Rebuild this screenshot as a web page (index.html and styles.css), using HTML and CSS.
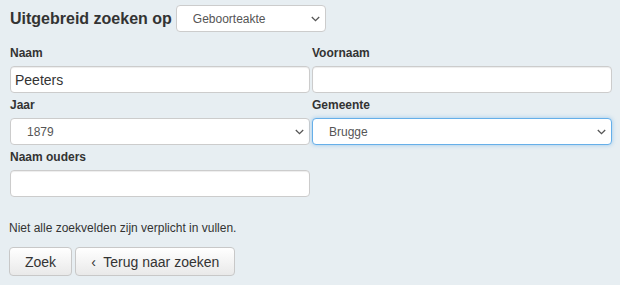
FILE: index.html
```html
<!DOCTYPE html>
<html lang="nl">
<head>
<meta charset="utf-8">
<title>Uitgebreid zoeken</title>
<link rel="stylesheet" href="styles.css">
</head>
<body>
<div class="page">
  <div class="header">
    <h1 class="title">Uitgebreid zoeken op</h1>
    <span class="select-wrap select-wrap-type">
      <select class="select">
        <option>Geboorteakte</option>
      </select>
      <svg class="chev" width="9" height="6" viewBox="0 0 9 6"><path d="M0.8 1 L4.5 4.6 L8.2 1" fill="none" stroke="#555" stroke-width="1.3"/></svg>
    </span>
  </div>
  <div class="grid">
    <div class="field">
      <label class="label">Naam</label>
      <input class="input" type="text" value="Peeters">
    </div>
    <div class="field">
      <label class="label">Voornaam</label>
      <input class="input" type="text" value="">
    </div>
    <div class="field">
      <label class="label">Jaar</label>
      <span class="select-wrap">
        <select class="select">
          <option>1879</option>
        </select>
        <svg class="chev" width="9" height="6" viewBox="0 0 9 6"><path d="M0.8 1 L4.5 4.6 L8.2 1" fill="none" stroke="#555" stroke-width="1.3"/></svg>
      </span>
    </div>
    <div class="field">
      <label class="label">Gemeente</label>
      <span class="select-wrap">
        <select class="select focused">
          <option>Brugge</option>
        </select>
        <svg class="chev" width="9" height="6" viewBox="0 0 9 6"><path d="M0.8 1 L4.5 4.6 L8.2 1" fill="none" stroke="#555" stroke-width="1.3"/></svg>
      </span>
    </div>
    <div class="field">
      <label class="label">Naam ouders</label>
      <input class="input" type="text" value="">
    </div>
  </div>
  <p class="note">Niet alle zoekvelden zijn verplicht in vullen.</p>
  <div class="buttons">
    <button class="btn">Zoek</button>
    <button class="btn">&lsaquo;&nbsp; Terug naar zoeken</button>
  </div>
</div>
</body>
</html>
```
FILE: styles.css
```css
html, body {
  margin: 0;
  padding: 0;
  background: #e7eef2;
}
body {
  font-family: "Liberation Sans", Arial, sans-serif;
  color: #333;
}
.page {
  padding: 5px 10px 0 10px;
}
.header {
  display: flex;
  align-items: center;
  gap: 4px;
  height: 27px;
}
.title {
  margin: 0;
  font-size: 16px;
  font-weight: bold;
  color: #333;
  line-height: 20px;
}
.select-wrap {
  position: relative;
  display: block;
  width: 300px;
  height: 27px;
}
.select-wrap-type {
  width: 150px;
}
.select {
  -webkit-appearance: none;
  appearance: none;
  display: block;
  width: 100%;
  height: 27px;
  box-sizing: border-box;
  border: 1px solid #ccc;
  border-radius: 4px;
  background-color: #fff;
  font-family: "Liberation Sans", Arial, sans-serif;
  font-size: 12px;
  color: #555;
  padding: 0 20px 0 16px;
  margin: 0;
  outline: none;
}
.chev {
  position: absolute;
  right: 6px;
  top: 11px;
  pointer-events: none;
}
.focused {
  border-color: #66afe9;
  box-shadow: 0 0 4px rgba(102, 175, 233, 0.6);
}
.grid {
  display: grid;
  grid-template-columns: 300px 300px;
  column-gap: 2px;
  row-gap: 5px;
  margin-top: 14px;
}
.field {
  display: flex;
  flex-direction: column;
}
.label {
  font-size: 12px;
  font-weight: bold;
  line-height: 14px;
  margin-bottom: 6px;
  color: #333;
}
.input {
  height: 27px;
  box-sizing: border-box;
  border: 1px solid #ccc;
  border-radius: 4px;
  background: #fff;
  box-shadow: inset 0 1px 1px rgba(0, 0, 0, 0.075);
  font-family: "Liberation Sans", Arial, sans-serif;
  font-size: 14px;
  color: #333;
  padding: 0 4px;
  margin: 0;
  width: 300px;
}
.note {
  margin: 24px 0 0 -1px;
  font-size: 12px;
  line-height: 14px;
  color: #333;
}
.buttons {
  display: flex;
  gap: 3px;
  margin-top: 12px;
  margin-left: -1px;
}
.btn {
  height: 29px;
  box-sizing: border-box;
  padding: 0 15px;
  border: 1px solid #c8c8c8;
  border-radius: 4px;
  background: linear-gradient(#ffffff, #e9e9e9);
  font-family: "Liberation Sans", Arial, sans-serif;
  font-size: 14px;
  color: #333;
  margin: 0;
}
```
